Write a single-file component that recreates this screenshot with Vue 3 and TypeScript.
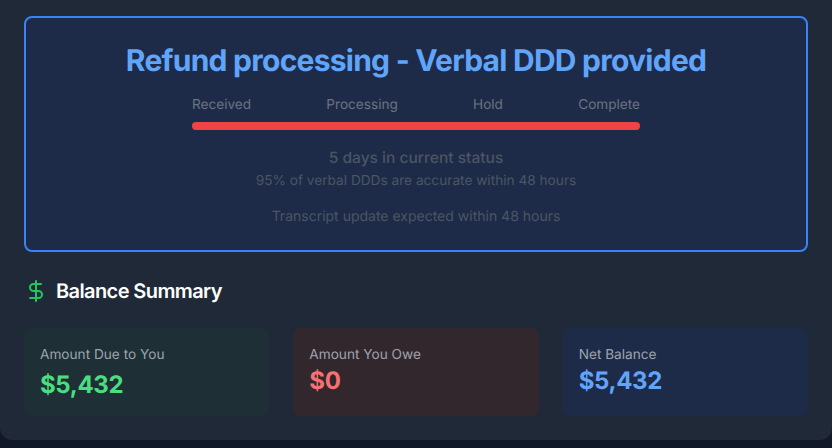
<template>
  <div class="panel">
    <section class="status">
      <h1 class="title">Refund processing - Verbal DDD provided</h1>
      <div class="progress">
        <div class="steps">
          <span v-for="step in steps" :key="step">{{ step }}</span>
        </div>
        <div class="track"></div>
      </div>
      <p class="days">5 days in current status</p>
      <p class="note accuracy">95% of verbal DDDs are accurate within 48 hours</p>
      <p class="note expected">Transcript update expected within 48 hours</p>
    </section>

    <div class="heading">
      <svg class="icon" viewBox="0 0 24 24" fill="none" stroke="currentColor" stroke-width="2" stroke-linecap="round" stroke-linejoin="round">
        <line x1="12" y1="2" x2="12" y2="22" />
        <path d="M17 5H9.5a3.5 3.5 0 0 0 0 7h5a3.5 3.5 0 0 1 0 7H6" />
      </svg>
      <h2>Balance Summary</h2>
    </div>

    <div class="cards">
      <div v-for="card in cards" :key="card.label" class="card" :class="card.tone">
        <div class="label">{{ card.label }}</div>
        <div class="value">{{ card.value }}</div>
      </div>
    </div>
  </div>
</template>

<script setup lang="ts">
const steps = ['Received', 'Processing', 'Hold', 'Complete']

const cards = [
  { label: 'Amount Due to You', value: '$5,432', tone: 'green' },
  { label: 'Amount You Owe', value: '$0', tone: 'red' },
  { label: 'Net Balance', value: '$5,432', tone: 'blue' }
]
</script>

<style>
html,
body {
  margin: 0;
  background: #111827;
}
</style>

<style scoped>
.panel {
  box-sizing: border-box;
  width: 832px;
  height: 440px;
  padding: 16px 24px 24px;
  background: #1f2937;
  border-radius: 0 0 12px 12px;
  font-family: Inter, 'Liberation Sans', sans-serif;
  text-rendering: geometricPrecision;
}
.status {
  padding: 25px 24px 23px;
  border: 2px solid #3b82f6;
  border-radius: 8px;
  background: #1e2b48;
  text-align: center;
}
.title {
  margin: 0 0 16px;
  font-size: 30px;
  line-height: 36px;
  font-weight: 700;
  letter-spacing: -0.025em;
  color: #60a5fa;
}
.progress {
  width: 448px;
  margin: 0 auto 16px;
}
.steps {
  display: flex;
  justify-content: space-between;
  margin-bottom: 7px;
  font-size: 13.6px;
  line-height: 20px;
  color: #6b7280;
}
.track {
  height: 8px;
  border-radius: 4px;
  background: #ef4444;
}
.days {
  margin: 0 0 1px;
  font-size: 15.55px;
  line-height: 24px;
  font-weight: 500;
  color: #4b5563;
}
.note {
  margin: 0;
  font-size: 14px;
  line-height: 20px;
  color: #4b5563;
}
.accuracy {
  font-size: 13.66px;
}
.expected {
  margin-top: 16px;
}
.heading {
  display: flex;
  align-items: center;
  gap: 8px;
  margin: 24px 0;
  height: 28px;
}
.icon {
  width: 24px;
  height: 24px;
  margin-top: 2px;
  color: #22c55e;
}
.heading h2 {
  margin: 2px 0 0;
  font-size: 20px;
  line-height: 28px;
  font-weight: 600;
  letter-spacing: -0.03em;
  color: #fff;
}
.cards {
  display: grid;
  grid-template-columns: repeat(3, 1fr);
  gap: 24px;
}
.card {
  padding: 17px 16px 15px;
  border-radius: 8px;
}
.label {
  font-size: 13.65px;
  line-height: 20px;
  color: #9ca3af;
}
.value {
  font-size: 24px;
  line-height: 32px;
  font-weight: 700;
  letter-spacing: -0.35px;
}
.green {
  background: #1e3035;
}
.green .label {
  margin-bottom: 4px;
}
.green .value {
  color: #4ade80;
}
.red {
  background: #33272e;
}
.red .value {
  color: #f87171;
}
.blue {
  background: #1e2b48;
}
.blue .value {
  color: #60a5fa;
}
</style>
